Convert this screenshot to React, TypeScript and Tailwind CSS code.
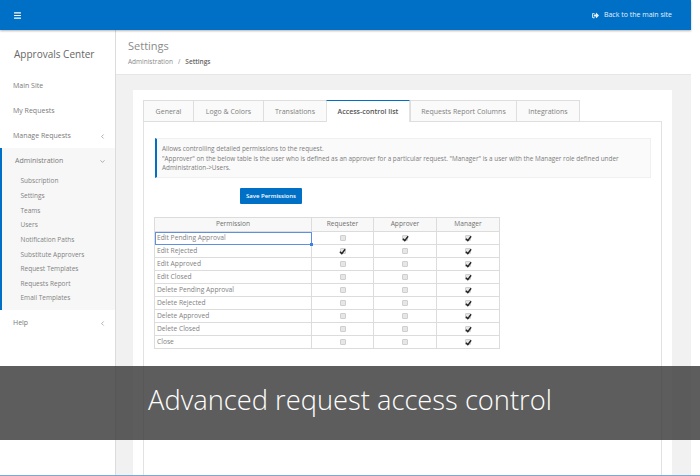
import { ChevronDown, ChevronLeft, Menu } from "lucide-react";
import { FaSignOutAlt } from "react-icons/fa";

const subItems = [
  "Subscription",
  "Settings",
  "Teams",
  "Users",
  "Notification Paths",
  "Substitute Approvers",
  "Request Templates",
  "Requests Report",
  "Email Templates",
];

const tabs = [
  { label: "General", w: "w-[51px]" },
  { label: "Logo & Colors", w: "w-[71px]" },
  { label: "Translations", w: "w-[64px]" },
  { label: "Access-control list", w: "w-[84px]", active: true },
  { label: "Requests Report Columns", w: "w-[107px]" },
  { label: "Integrations", w: "w-[64px]" },
];

// requester, approver, manager
const rows: [string, boolean, boolean, boolean][] = [
  ["Edit Pending Approval", false, true, true],
  ["Edit Rejected", true, false, true],
  ["Edit Approved", false, false, true],
  ["Edit Closed", false, false, true],
  ["Delete Pending Approval", false, false, true],
  ["Delete Rejected", false, false, true],
  ["Delete Approved", false, false, true],
  ["Delete Closed", false, false, true],
  ["Close", false, false, true],
];

function Check({ on }: { on: boolean }) {
  return (
    <div className="flex h-full items-center justify-center">
      <div className="flex h-[6px] w-[6px] items-center justify-center rounded-[1px] border border-[#cfcfcf] bg-[#e6e6e6]">
        {on && (
          <svg viewBox="0 0 8 8" className="h-[7px] w-[7px] shrink-0 overflow-visible">
            <path d="M1 4.2 3.2 6.4 7 1.4" fill="none" stroke="#222" strokeWidth="1.6" />
          </svg>
        )}
      </div>
    </div>
  );
}

function NavLink({ label, chevron }: { label: string; chevron?: boolean }) {
  return (
    <div className="flex h-[25px] items-center justify-between pl-[13px] pr-[9px] pt-[2px] text-[7px] text-[#7a7a7a]">
      <span>{label}</span>
      {chevron && <ChevronLeft className="h-[7px] w-[7px]" strokeWidth={2} />}
    </div>
  );
}

export default function App() {
  return (
    <div className="relative h-[476px] w-[700px] overflow-hidden bg-white font-['Open_Sans','Noto_Sans',sans-serif]">
      <div className="flex h-full w-[691px] flex-col">
        <header className="z-10 flex h-[30px] shrink-0 items-center justify-between bg-[#0070c6] pl-[13px] pr-[19px] shadow-[0_1px_2px_rgba(0,0,0,0.3)]">
          <Menu className="h-[9px] w-[9px] text-white" strokeWidth={3} />
          <div className="flex items-center gap-[5px] text-[7px] text-[#e6f1fa]">
            <FaSignOutAlt className="h-[7px] w-[7px]" />
            <span>Back to the main site</span>
          </div>
        </header>

        <div className="flex min-h-0 flex-1">
          <aside className="w-[116px] shrink-0 border-r border-[#dcdcdc] bg-white">
            <div className="pl-[14px] pt-[17px] text-[10px] leading-[14px] text-[#666]">Approvals Center</div>
            <div className="mt-[12px]">
              <NavLink label="Main Site" />
              <NavLink label="My Requests" />
              <NavLink label="Manage Requests" chevron />
            </div>
            <div className="border-l-2 border-[#0070c6] bg-[#f7f7f7] pb-[5px]">
              <div className="flex h-[25px] items-center justify-between pl-[13px] pr-[9px] pt-[2px] text-[7px] text-[#7a7a7a]">
                <span>Administration</span>
                <ChevronDown className="h-[7px] w-[7px]" strokeWidth={2} />
              </div>
              {subItems.map((s) => (
                <div key={s} className="flex h-[14.63px] items-center pl-[18.5px] pt-[2px] text-[6.5px] text-[#828282]">
                  {s}
                </div>
              ))}
            </div>
            <NavLink label="Help" chevron />
          </aside>

          <main className="flex w-[575px] shrink-0 flex-col bg-[#f1f1f1]">
            <div className="h-[45px] shrink-0 border-b border-[#e6e6e6] bg-white pl-[12px] pt-[8px]">
              <div className="text-[11px] leading-[15px] text-[#8a8a8a]">Settings</div>
              <div className="mt-[4px] flex items-center gap-[5px] text-[6.5px] leading-[9px] text-[#8a8a8a]">
                <span>Administration</span>
                <span>/</span>
                <span className="font-semibold text-[#666]">Settings</span>
              </div>
            </div>

            <div className="ml-[17px] mr-[19px] mt-[15px] flex-1 bg-white px-[10px] pt-[10px]">
              <div className="relative z-10 flex h-[22px]">
                {tabs.map((t) =>
                  t.active ? (
                    <div
                      key={t.label}
                      className={`flex h-[22px] items-center justify-center border-x border-t border-x-[#e2e2e2] border-t-[#0070c6] bg-white pt-[2px] text-[7px] font-semibold text-[#555] ${t.w}`}
                    >
                      {t.label}
                    </div>
                  ) : (
                    <div
                      key={t.label}
                      className={`-mr-px flex h-[22px] items-center justify-center border border-[#dedede] bg-[#fafafa] pt-[2px] text-[7px] text-[#808080] ${t.w}`}
                    >
                      {t.label}
                    </div>
                  ),
                )}
              </div>
              <div className="-mt-px h-[400px] border border-[#e2e2e2] bg-white pl-[11px] pr-[10px] pt-[16px]">
                <div className="h-[40px] border border-l-2 border-[#f0f0f0] border-l-[#0070c6] bg-[#fafafa] pl-[5px] pt-[5px] text-[6.4px] leading-[9.5px] text-[#7d7d7d]">
                  Allows controlling detailed permissions to the request.
                  <br />
                  "Approver" on the below table is the user who is defined as an approver for a particular request. "Manager" is a user with the Manager role defined under
                  <br />
                  Administration-&gt;Users.
                </div>
                <div className="mt-[10px] pl-[85px]">
                  <button className="flex h-[16px] w-[62px] items-center justify-center rounded-[1px] bg-[#0070c6] text-[6px] font-semibold text-white">
                    Save Permissions
                  </button>
                </div>
                <table className="ml-[-1px] mt-[13px] w-[345px] table-fixed border-collapse text-[6.7px] text-[#828282]">
                  <colgroup>
                    <col className="w-[157px]" />
                    <col className="w-[62px]" />
                    <col className="w-[63px]" />
                    <col className="w-[63px]" />
                  </colgroup>
                  <thead>
                    <tr className="h-[14px]">
                      {["Permission", "Requester", "Approver", "Manager"].map((h) => (
                        <th key={h} className="border border-[#dcdcdc] bg-[#f8f8f8] p-0 text-center text-[6.6px] font-normal leading-none text-[#707070]">
                          {h}
                        </th>
                      ))}
                    </tr>
                  </thead>
                  <tbody>
                    {rows.map(([name, req, app, man], i) => (
                      <tr key={name} className="h-[13px]">
                        <td
                          className={
                            i === 0
                              ? "relative border border-[#dcdcdc] p-0 pl-[2px] leading-none outline outline-1 -outline-offset-1 outline-[#5f8fe0]"
                              : "border border-[#dcdcdc] p-0 pl-[2px] leading-none"
                          }
                        >
                          {name}
                          {i === 0 && <span className="absolute -bottom-[2px] -right-[2px] h-[3px] w-[3px] bg-[#3f7fe8]" />}
                        </td>
                        <td className="border border-[#dcdcdc] p-0"><Check on={req} /></td>
                        <td className="border border-[#dcdcdc] p-0"><Check on={app} /></td>
                        <td className="border border-[#dcdcdc] p-0"><Check on={man} /></td>
                      </tr>
                    ))}
                  </tbody>
                </table>
              </div>
            </div>
          </main>
        </div>
      </div>

      <div className="absolute inset-x-0 top-[366px] flex h-[74px] items-center bg-[rgba(60,60,60,0.83)] pb-[6px] pl-[148px] text-[27.3px] font-light text-white">
        Advanced request access control
      </div>
      <div className="absolute inset-x-0 bottom-0 h-px bg-[#7aa9d6]" />
    </div>
  );
}
